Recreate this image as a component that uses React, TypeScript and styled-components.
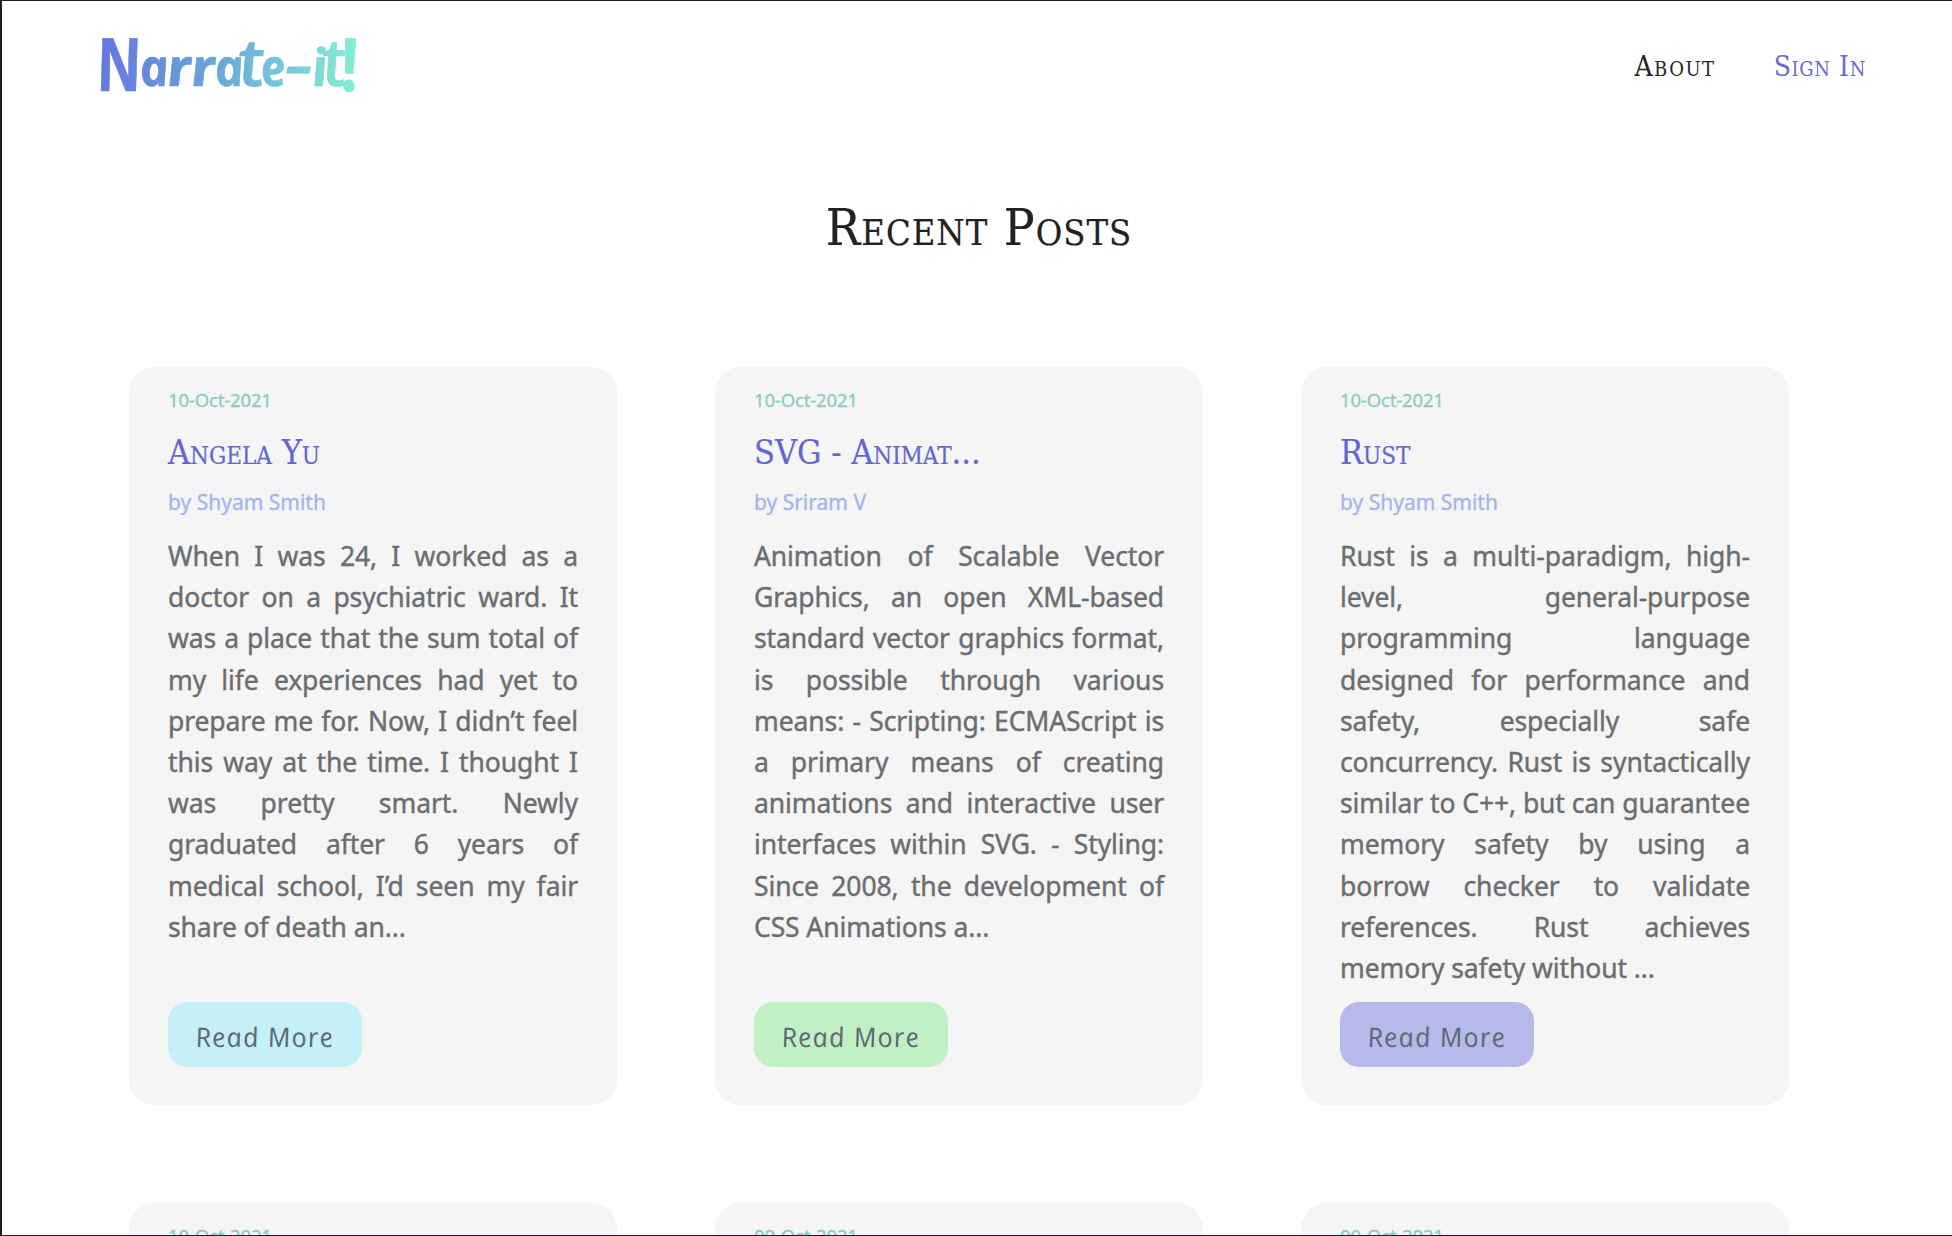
import React from 'react';
import styled, { createGlobalStyle } from 'styled-components';

const GlobalStyle = createGlobalStyle`
  *, *::before, *::after { box-sizing: border-box; }
  body { margin: 0; background: #fff; }
`;

const sans = `"Noto Sans", "Open Sans", sans-serif`;
const serif = `"DejaVu Serif Condensed", "DejaVu Serif", serif`;

const Frame = styled.div`
  width: 100%;
  height: 1236px;
  overflow: hidden;
  background: #fff;
  border: solid #1d1c22;
  border-width: 1px 0 1px 2px;
  font-family: ${sans};
`;

const Header = styled.header`
  display: flex;
  align-items: center;
  justify-content: space-between;
  height: 130px;
  padding: 0 86px 0 96px;
`;

const Logo = styled.svg`
  display: block;
  width: 270px;
  height: 100px;
  overflow: visible;
  font-family: "Open Sans", sans-serif;
  font-style: italic;
`;

const Nav = styled.nav`
  display: flex;
  gap: 58px;
  padding-top: 2px;
`;

const NavLink = styled.a<{ $accent?: boolean }>`
  font: 28px/36px ${serif};
  font-variant: small-caps;
  letter-spacing: ${(p) => (p.$accent ? '0.6px' : '1.5px')};
  color: ${(p) => (p.$accent ? '#6a6bd0' : '#262626')};
`;

const Heading = styled.h1`
  margin: 65px 0 0;
  padding-left: 4px;
  text-align: center;
  font: 400 51px/64px ${serif};
  font-variant: small-caps;
  letter-spacing: 1px;
  color: #222;
  -webkit-text-stroke: 0.2px currentColor;
`;

const Grid = styled.main`
  display: grid;
  grid-template-columns: repeat(3, 488px);
  grid-auto-rows: 738px;
  gap: 98px;
  margin: 107px 0 0 127px;
`;

const Card = styled.article`
  display: flex;
  flex-direction: column;
  align-items: flex-start;
  padding: 21px 39px 38px;
  border-radius: 25px;
  background: #f5f5f5;
`;

const PostDate = styled.time`
  font-size: 18.5px;
  line-height: 24px;
  letter-spacing: -0.15px;
  color: #8accc3;
  -webkit-text-stroke: 0.3px currentColor;
`;

const Title = styled.h2`
  margin: 20px 0 0;
  font: 400 34px/40px ${serif};
  font-variant: small-caps;
  color: #6266d2;
  -webkit-text-stroke: 0.2px currentColor;
`;

const Author = styled.div`
  margin-top: 15px;
  font-size: 21px;
  line-height: 30px;
  color: #a5b4f0;
  -webkit-text-stroke: 0.3px currentColor;
`;

const Excerpt = styled.p`
  width: 100%;
  margin: 19px 0 0;
  font-size: 26.5px;
  line-height: 41.2px;
  letter-spacing: -0.1px;
  text-align: justify;
  color: #6b6d70;
  -webkit-text-stroke: 0.4px currentColor;
`;

const ReadMore = styled.button<{ $tint: string }>`
  flex: none;
  display: flex;
  align-items: center;
  justify-content: center;
  width: 194px;
  height: 65px;
  margin-top: auto;
  padding: 4px 1px 0 0;
  border: 0;
  border-radius: 19px;
  background: ${(p) => p.$tint};
  color: #5b6a73;
  font: italic 400 27px/32px "Open Sans", sans-serif;
  letter-spacing: 1.1px;
`;

const Upright = styled.span`
  display: inline-block;
  transform: skewX(10deg);
`;

type Post = { date: string; title?: string; author?: string; excerpt?: string; tint?: string };

const posts: Post[] = [
  {
    date: '10-Oct-2021',
    title: 'Angela Yu',
    author: 'Shyam Smith',
    excerpt:
      'When I was 24, I worked as a doctor on a psychiatric ward. It was a place that the sum total of my life experiences had yet to prepare me for. Now, I didn’t feel this way at the time. I thought I was pretty smart. Newly graduated after 6 years of medical school, I’d seen my fair share of death an...',
    tint: '#c5f0f8',
  },
  {
    date: '10-Oct-2021',
    title: 'SVG - Animat...',
    author: 'Sriram V',
    excerpt:
      'Animation of Scalable Vector Graphics, an open XML-based standard vector graphics format, is possible through various means: - Scripting: ECMAScript is a primary means of creating animations and interactive user interfaces within SVG. - Styling: Since 2008, the development of CSS Animations a...',
    tint: '#c1f0c5',
  },
  {
    date: '10-Oct-2021',
    title: 'Rust',
    author: 'Shyam Smith',
    excerpt:
      'Rust is a multi-paradigm, high-level, general-purpose programming language designed for performance and safety, especially safe concurrency. Rust is syntactically similar to C++, but can guarantee memory safety by using a borrow checker to validate references. Rust achieves memory safety without ...',
    tint: '#b5baeb',
  },
  { date: '10-Oct-2021' },
  { date: '09-Oct-2021' },
  { date: '09-Oct-2021' },
];

// x, baseline, size, drawn width and weight of each wordmark letter
const letters: [string, number, number, number, number, number][] = [
  ['N', 0, 75, 74, 45, 700],
  ['a', 43, 70, 52, 29, 700],
  ['r', 70, 70, 52, 25, 700],
  ['r', 94, 70, 52, 25, 700],
  ['a', 118, 70, 52, 29, 700],
  ['t', 142, 70, 66, 26, 600],
  ['e', 164, 70, 52, 25, 700],
  ['-', 188, 68, 52, 28, 700],
  ['i', 215, 70, 52, 16, 700],
  ['t', 226, 70, 66, 24, 600],
  ['!', 244, 75, 74, 18, 700],
];

function Wordmark() {
  return (
    <Logo viewBox="0 0 270 100" role="img">
      <defs>
        <linearGradient id="brand" gradientUnits="userSpaceOnUse" x1="0" y1="20" x2="255" y2="70">
          <stop offset="0" stopColor="#6672e2" />
          <stop offset="0.5" stopColor="#6aa9d8" />
          <stop offset="1" stopColor="#85edd5" />
        </linearGradient>
      </defs>
      <g transform="translate(-9 0) skewX(8)" fill="url(#brand)" stroke="url(#brand)" strokeWidth="0.6" strokeLinejoin="round">
        {letters.map(([ch, x, y, size, w, weight], i) => (
          <text key={i} x={x} y={y} fontSize={size} fontWeight={weight} textLength={w} lengthAdjust="spacingAndGlyphs">
            {ch}
          </text>
        ))}
      </g>
    </Logo>
  );
}

export default function App() {
  return (
    <>
      <GlobalStyle />
      <Frame>
        <Header>
          <Wordmark />
          <Nav>
            <NavLink>About</NavLink>
            <NavLink $accent>Sign In</NavLink>
          </Nav>
        </Header>
        <Heading>Recent Posts</Heading>
        <Grid>
          {posts.map((p, i) => (
            <Card key={i}>
              <PostDate>{p.date}</PostDate>
              {p.title && <Title>{p.title}</Title>}
              {p.author && <Author>by {p.author}</Author>}
              {p.excerpt && <Excerpt>{p.excerpt}</Excerpt>}
              {p.tint && (
                <ReadMore $tint={p.tint}>
                  <Upright>Read More</Upright>
                </ReadMore>
              )}
            </Card>
          ))}
        </Grid>
      </Frame>
    </>
  );
}
